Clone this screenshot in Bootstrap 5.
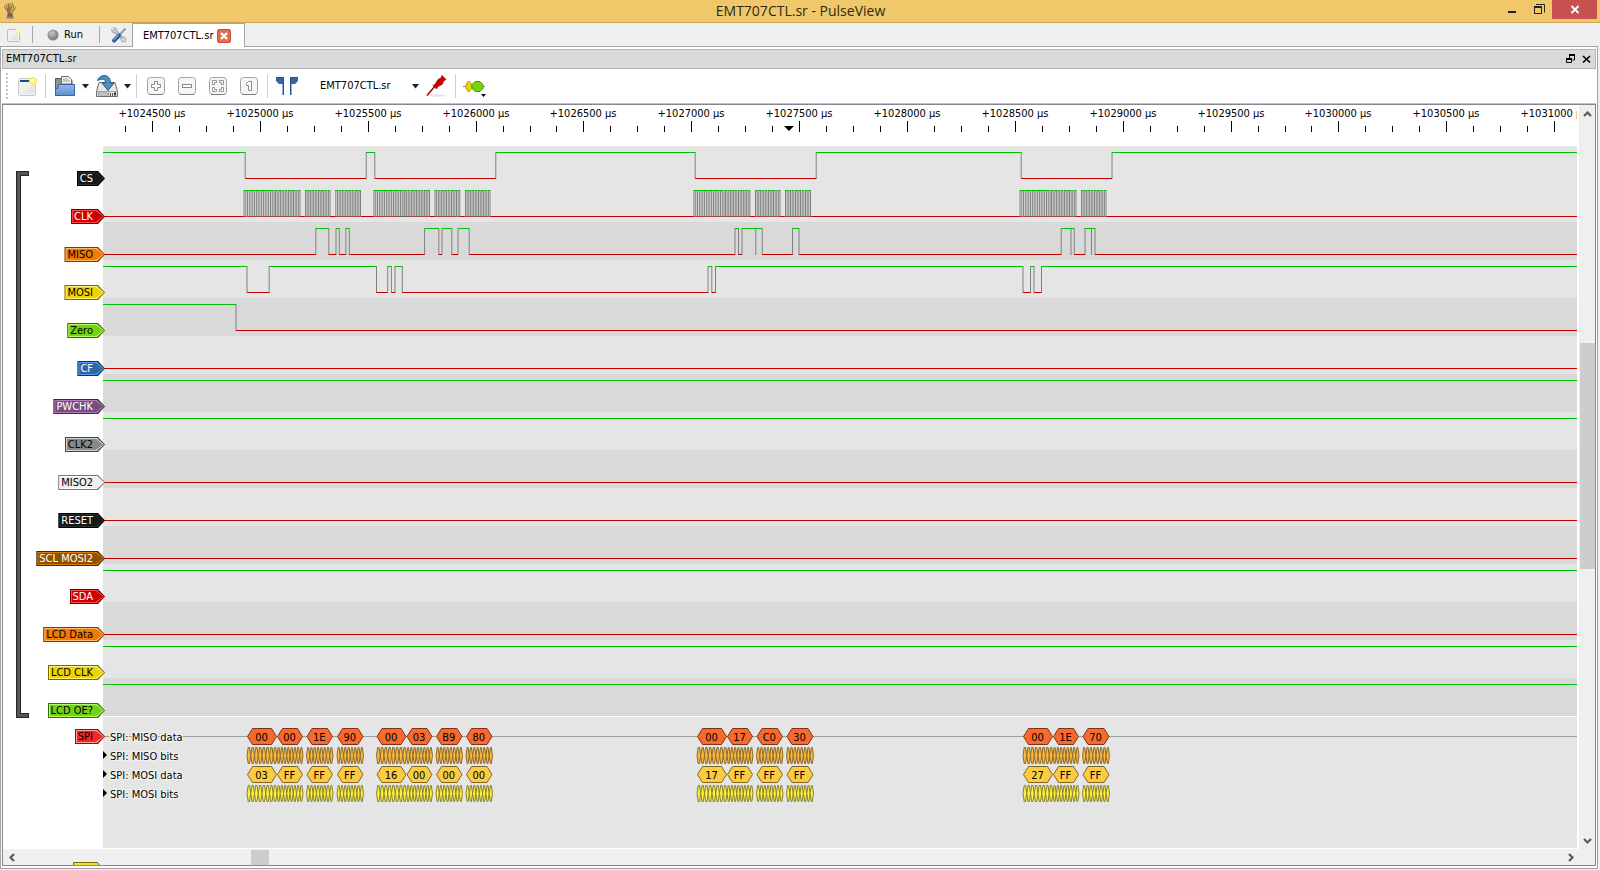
<!DOCTYPE html>
<html lang="en">
<head>
<meta charset="utf-8">
<meta name="viewport" content="width=device-width, initial-scale=1">
<title>EMT707CTL.sr - PulseView</title>
<link href="https://cdn.jsdelivr.net/npm/bootstrap@5.3.0/dist/css/bootstrap.min.css" rel="stylesheet">
<style>
  :root { --ui: "DejaVu Sans Condensed", "DejaVu Sans", sans-serif; }
  body { font: 11px/16px var(--ui); color: #000; background: #efefef; }
  button { font: inherit; color: inherit; border: 0; padding: 0; background: none; }
  svg { display: block; flex: none; }
  .titlebar { height: 23px; background: #f0c869; border-bottom: 1px solid #c9a558; }
  .titlebar h1 { font: 14px/22px "Open Sans", "Noto Sans", sans-serif; color: #2e2814; }
  .title-side { flex: 1 1 0; }
  .win-btn { width: 26px; height: 19px; }
  .win-close { width: 45px; background: #c75050; }
  .menubar { height: 23px; }
  .menu-rule { width: 1px; height: 17px; background: #a8a8a8; }
  .file-tab { height: 24px; margin-bottom: -1px; padding: 0 12px 0 10px; background: #fff; border: 1px solid #a3a3a3; border-bottom: 0; z-index: 1; }
  .tab-link { color: #000; text-decoration: none; margin-right: 2px; }
  .dock { border: 1px solid #a3a3a3; background: #fff; margin: 0 2px 1px 0; padding: 2px 1px; }
  .dock-title { height: 20px; background: #d9d9d9; border: 1px solid #b4b4b4; padding-left: 3px; }
  .dock-title h2 { font: inherit; line-height: 20px; }
  .toolbar { height: 35px; border-bottom: 1px solid #c4c4c4; padding-left: 4px; }
  .tool { width: 31px; height: 32px; display: flex; align-items: center; justify-content: center; }
  .tool-drop { width: 11px; }
  .grip { width: 5px; height: 26px; background: repeating-linear-gradient(#c4c4c4 0 2px, transparent 2px 4px) 0 0 / 2px 100% no-repeat; }
  .tool-rule { width: 1px; height: 24px; margin: 0 3px; background: #cfcfcf; }
  .device { width: 119px; }
  .device select { appearance: none; border: 0; background: none; font: inherit; color: #000; padding: 0 18px; width: 119px; height: 24px; }
  .device svg { position: absolute; right: 1px; top: 10px; pointer-events: none; }
  .view-frame { border: 1px solid #828790; display: grid; grid-template-columns: minmax(0, 1fr) 16px; grid-template-rows: minmax(0, 1fr) 16px; }
  .ruler { height: 41px; }
  .traces { grid-area: 1 / 1; padding-right: 2px; }
  .view-text { font: 11px var(--ui); }
  .bracket { width: 13px; margin: 25px 0 -2px 13px; background: #262626; position: relative;
    clip-path: polygon(0 0, 100% 0, 100% 5px, 5px 5px, 5px calc(100% - 5px), 100% calc(100% - 5px), 100% 100%, 0 100%); }
  .bracket::after { content: ""; position: absolute; inset: 1px; background: #555;
    clip-path: polygon(0 0, 100% 0, 100% 3px, 3px 3px, 3px calc(100% - 3px), 100% calc(100% - 3px), 100% 100%, 0 100%); }
  .channel { display: grid; grid-template-columns: 74px minmax(0, 1fr); height: 38px; }
  .channel-head { padding-top: 25px; margin-right: -2px; z-index: 1; display: flex; justify-content: flex-end; align-items: flex-start; }
  .lane { background: #e5e5e5; }
  .lane-dark { background: #d9d9d9; }
  .tag { position: relative; height: 15px; line-height: 16px; padding: 0 12px 0 3px; white-space: nowrap; color: #000; background: var(--edge); isolation: isolate; }
  .tag, .tag::before, .tag::after { clip-path: polygon(0 0, calc(100% - 7px) 0, 100% 50%, calc(100% - 7px) 100%, 0 100%); }
  .tag::before, .tag::after { content: ""; position: absolute; z-index: -1; }
  .tag::before { inset: 1px; background: var(--glow); }
  .tag::after { inset: 2px; background: var(--fill); }
  .tag-black { --fill: #16191a; --glow: #272c2d; --edge: #000; color: #fff; }
  .tag-red { --fill: #cc0000; --glow: #ff4848; --edge: #6a0000; color: #fff; }
  .tag-orange { --fill: #f57900; --glow: #ffb868; --edge: #7a3c00; }
  .tag-yellow { --fill: #edd400; --glow: #fff27a; --edge: #766a00; }
  .tag-green { --fill: #73d216; --glow: #adff58; --edge: #396908; }
  .tag-blue { --fill: #3465a4; --glow: #5099f8; --edge: #1a3252; color: #fff; }
  .tag-purple { --fill: #75507b; --glow: #b57abf; --edge: #3a283d; color: #fff; }
  .tag-grey { --fill: #888a85; --glow: #cfd2ca; --edge: #444542; }
  .tag-white { --fill: #eeeeec; --glow: #fff; --edge: #777776; }
  .tag-brown { --fill: #8f5202; --glow: #d87c04; --edge: #472900; color: #fff; }
  .tag-spi { --fill: #ef2929; --glow: #ff9c9c; --edge: #771414; }
  .decoder { border-top: 1px solid #fff; border-bottom: 1px solid #fff; display: grid; grid-template-columns: 100px minmax(0, 1fr); min-height: 120px; }
  .decoder .channel-head { padding-top: 12px; }
  .scroll-v, .scroll-h { background: #efefef; display: flex; align-items: center; }
  .scroll-v { grid-area: 1 / 2; flex-direction: column; }
  .scroll-h { grid-area: 2 / 1 / 3 / 3; padding-right: 16px; }
  .scroll-btn { width: 16px; height: 16px; display: flex; align-items: center; justify-content: center; }
  .thumb { background: #cdcdcd; }
  .scroll-v .thumb { width: 15px; }
  .scroll-h .thumb { height: 15px; }
  .next-tag { position: absolute; left: 70px; bottom: 0; height: 3px; overflow: hidden; }
</style>
</head>
<body>
<div class="d-flex flex-column min-vh-100">

  <header class="titlebar d-flex">
    <div class="title-side ps-1">
      <svg width="14" height="20" viewBox="0 0 14 20" style="margin-left:-1px">
        <path d="M6 14L1 6M6 14L3 4M6.500 14L5 3M7 14L7 3M7.500 14L9.500 3M8 14L11 5M8 14L13 7" stroke="#7d6c48" fill="none"/>
        <path d="M6 13L4.500 8" stroke="#b04aa0"/><path d="M6.500 13L6 7" stroke="#e0522f" stroke-width="1.500"/><path d="M7.500 13V7" stroke="#63a83c"/><path d="M8 13L9.500 8" stroke="#e8a030" stroke-width="1.500"/>
        <path d="M4.500 13h5l.500 5h-6z" fill="#70685e"/><path d="M3.500 16.500h7v2h-7z" fill="#8a8378"/>
      </svg>
    </div>
    <h1 class="m-0 text-nowrap">EMT707CTL.sr - PulseView</h1>
    <div class="title-side d-flex justify-content-end" style="padding-right:3px">
      <button class="win-btn" aria-label="Minimize"><svg width="26" height="19"><path d="M8 11h8v2h-8z" fill="#222"/></svg></button>
      <button class="win-btn" aria-label="Restore"><svg width="26" height="19"><path d="M10 4.500h8.500v8" fill="none" stroke="#222"/><path d="M8.500 6.500h7v7h-7z" fill="none" stroke="#222"/><path d="M8 6h8v2h-8z" fill="#222"/></svg></button>
      <button class="win-btn win-close" aria-label="Close"><svg width="45" height="19"><path d="M19.500 6l7 7M26.500 6l-7 7" stroke="#fff" stroke-width="1.800"/></svg></button>
    </div>
  </header>

  <nav class="menubar d-flex align-items-center" aria-label="Sessions">
    <button class="ms-1" aria-label="New session">
      <svg width="18" height="18"><rect x="3.500" y="3.500" width="12" height="12" rx="1" fill="#f0f0ee" stroke="#bcbcb8"/><path d="M5 14l9-8v8z" fill="#e6e6e4"/><circle cx="14" cy="5" r="2.500" fill="#f4efa8"/><circle cx="14" cy="5" r="1" fill="#fffce0"/></svg>
    </button>
    <span class="menu-rule" style="margin-left:10px"></span>
    <button class="d-flex align-items-center" style="margin-left:13px">
      <svg width="14" height="14"><defs><radialGradient id="led" cx=".4" cy=".35"><stop offset="0" stop-color="#c6c9c4"/><stop offset="1" stop-color="#858782"/></radialGradient></defs><circle cx="7" cy="7" r="5.500" fill="url(#led)"/></svg>
      <span style="margin-left:4px">Run</span>
    </button>
    <span class="menu-rule" style="margin-left:16px"></span>
    <button style="margin-left:10px" aria-label="Settings">
      <svg width="18" height="18" viewBox="0 0 18 18"><path d="M5 5L14 14" stroke="#8e9090" stroke-width="3"/><path d="M5 5L14 14" stroke="#dcdcda" stroke-width="1.400"/><path d="M3.500 1.500L5 4L4 5L1.500 3.500Q1.500 7 5 7.500L7.500 5Q7 1.500 3.500 1.500z" fill="#d6d6d4" stroke="#8e9090" stroke-width=".7"/><circle cx="13.500" cy="13.500" r="2.500" fill="#d6d6d4" stroke="#8e9090" stroke-width=".7"/><path d="M15.500 2.500L8.500 10" stroke="#9b9d9d" stroke-width="2"/><path d="M9 9.500L4 14.500" stroke="#2f5c9c" stroke-width="4" stroke-linecap="round"/><path d="M8 9.500L4 13.500" stroke="#7fa6da" stroke-width="1.500" stroke-linecap="round"/></svg>
    </button>
    <div class="file-tab d-flex align-items-center align-self-start" style="margin-left:4px">
      <a class="tab-link" href="#">EMT707CTL.sr</a>
      <button aria-label="Close tab"><svg width="16" height="16"><rect x="1.500" y="1.500" width="13" height="13" rx="1.500" fill="#dd6f50" stroke="#cf4a30"/><path d="M5 5l6 6M11 5l-6 6" stroke="#fff" stroke-width="2.400"/></svg></button>
    </div>
  </nav>

  <main class="dock d-flex flex-column flex-grow-1">
    <div class="dock-title d-flex align-items-center justify-content-between flex-shrink-0">
      <h2 class="m-0">EMT707CTL.sr</h2>
      <div class="d-flex">
        <button aria-label="Float"><svg width="16" height="17"><path d="M6 4h5.500v5h-2" fill="none" stroke="#000"/><path d="M6 3h6v2h-6z"/><path d="M3.500 7.500h5v4h-5z" fill="#d9d9d9" stroke="#000"/><path d="M3 7h6v2h-6zM6 5v2h1v-2z"/></svg></button>
        <button aria-label="Close"><svg width="16" height="17"><path d="M4 5l7 6.500M11 5l-7 6.500" stroke="#000" stroke-width="1.700"/></svg></button>
      </div>
    </div>

    <div class="toolbar d-flex align-items-center flex-shrink-0" role="toolbar" aria-label="Session">
      <span class="grip"></span>
      <button class="tool" aria-label="New view"><svg width="22" height="24"><rect x="2.500" y="4.500" width="17" height="17" rx="1" fill="#f0f0ee" stroke="#c8c8c4"/><path d="M4 6h12v2h-12z" fill="#204a87"/><path d="M5 20L18 10v10z" fill="#e6e6e4"/><circle cx="17" cy="7" r="4" fill="#f8ee60"/><circle cx="17" cy="7" r="2" fill="#fdfbc4"/></svg></button>
      <span class="tool-rule"></span>
      <button class="tool" aria-label="Open"><svg width="22" height="24"><path d="M1.500 21V4.500h5l1.500 2h10V21z" fill="#8f918c" stroke="#555753"/><path d="M7.500 10V2.500h7l3 3V10z" fill="#f4f4f2" stroke="#6c6e6a"/><path d="M9 5h5M9 7h7" stroke="#9a9a98"/><defs><linearGradient id="fold" x2="0" y2="1"><stop offset="0" stop-color="#96bae6"/><stop offset="1" stop-color="#5a8fd0"/></linearGradient></defs><path d="M1.500 21.500v-7h2l1.500-4h15.500v11z" fill="url(#fold)" stroke="#3465a4"/></svg></button>
      <button class="tool tool-drop" aria-label="Open menu"><svg width="8" height="5"><path d="M0 0h7l-3.500 4.500z" fill="#222"/></svg></button>
      <button class="tool" aria-label="Save"><svg width="24" height="24"><path d="M4 8.500h16l2.500 9v5h-21v-5z" fill="#e8e8e6" stroke="#6c6e6a"/><path d="M2 17.500h20" stroke="#a4a6a2"/><rect x="3.500" y="19" width="10" height="2" fill="#fff" stroke="#888"/><path d="M15.500 19v3M17.500 19v3" stroke="#555"/><rect x="19" y="18.500" width="2" height="3" fill="#333"/><path d="M2.500 6.500Q5 1 10 1.500Q15.500 2.500 15.500 9h3.500l-6 7.500L7 9h3.500Q11 5.500 8 5Q5 5 2.500 6.500z" fill="#4f8fbf" stroke="#245a86"/></svg></button>
      <button class="tool tool-drop" aria-label="Save menu"><svg width="8" height="5"><path d="M0 0h7l-3.500 4.500z" fill="#222"/></svg></button>
      <span class="tool-rule"></span>
      <button class="tool" aria-label="Zoom in"><svg width="20" height="20"><rect x="1.500" y="1.500" width="17" height="17" rx="3" fill="#f6f6f5" stroke="#a2a49f"/><path d="M3 18.500h14" stroke="#7c7e7a"/><path d="M8.500 5.500h3v3h3v3h-3v3h-3v-3h-3v-3h3z" fill="#fff" stroke="#888a85"/></svg></button>
      <button class="tool" aria-label="Zoom out"><svg width="20" height="20"><rect x="1.500" y="1.500" width="17" height="17" rx="3" fill="#f6f6f5" stroke="#a2a49f"/><path d="M3 18.500h14" stroke="#7c7e7a"/><rect x="5.500" y="8.500" width="9" height="3" fill="#fff" stroke="#888a85"/></svg></button>
      <button class="tool" aria-label="Zoom to fit"><svg width="20" height="20"><rect x="1.500" y="1.500" width="17" height="17" rx="3" fill="#f6f6f5" stroke="#a2a49f"/><path d="M3 18.500h14" stroke="#7c7e7a"/><path d="M4.500 4.500h4v2h-2v2h-2zM11.500 4.500h4v4h-2v-2h-2zM4.500 11.500h2v2h2v2h-4zM13.500 11.500h2v4h-4v-2h2z" fill="#fff" stroke="#888a85" stroke-width=".9"/></svg></button>
      <button class="tool" aria-label="Zoom one to one"><svg width="20" height="20"><rect x="1.500" y="1.500" width="17" height="17" rx="3" fill="#f6f6f5" stroke="#a2a49f"/><path d="M3 18.500h14" stroke="#7c7e7a"/><path d="M9.500 5.500h3v9h-3v-5h-2v-2z" fill="#fff" stroke="#888a85"/></svg></button>
      <span class="tool-rule"></span>
      <button class="tool" aria-label="Show cursors"><svg width="24" height="22"><path d="M1 2h8v18h-1.500v-11h-3.500l-3-3z" fill="#3465a4"/><path d="M23 2h-8v18h1.500v-11h3.500l3-3z" fill="#3465a4"/><path d="M1.500 2.500h7v17M22.500 2.500h-7v17" fill="none" stroke="#204a87" stroke-width=".8"/></svg></button>
      <div class="device position-relative">
        <select aria-label="Device"><option>EMT707CTL.sr</option></select>
        <svg width="8" height="5"><path d="M0 0h7l-3.500 4.500z" fill="#222"/></svg>
      </div>
      <button class="tool" aria-label="Configure channels"><svg width="22" height="24"><ellipse cx="12" cy="21.500" rx="8" ry="1.200" fill="#e4e4e4"/><path d="M1 21.500L9 12" stroke="#a40000" stroke-width="1.500"/><path d="M7 11.500l2-1 3-5 3-1.500 1-2.500 4 4-2.500 1.500-1 3-5 3-1 2z" fill="#cc0000" stroke="#a40000" stroke-width=".7"/></svg></button>
      <span class="tool-rule"></span>
      <button class="tool" aria-label="Add protocol decoder"><svg width="24" height="24"><path d="M0 12.500h22" stroke="#888"/><path d="M5 7.500h1.500l2 3v4l-2 3h-1.500l-2-3v-4z" fill="#edd400" stroke="#b39b00"/><path d="M12 7.500h5l3 3v4l-3 3h-5l-3-3v-4z" fill="#73d216" stroke="#4e9a06"/><path d="M18 20h5l-2.500 3z"/></svg></button>
    </div>

    <div class="view-frame flex-grow-1 position-relative">
      <div class="d-flex flex-column traces">
        <svg class="ruler view-text w-100" id="ruler"></svg>
        <div class="d-flex">
          <div class="bracket flex-shrink-0"></div>
          <div class="flex-grow-1" id="channels"></div>
        </div>
        <div class="decoder flex-grow-1">
          <div class="channel-head"><button class="tag tag-spi">SPI</button></div>
          <div class="lane"><svg class="view-text w-100" height="100" id="decoder"></svg></div>
        </div>
      </div>
      <div class="scroll-v">
        <button class="scroll-btn" aria-label="Scroll up"><svg width="9" height="7"><path d="M1 6l3.500-3.500L8 6" fill="none" stroke="#5a5a5a" stroke-width="2.200"/></svg></button>
        <div style="flex:222 0 0"></div><div class="thumb" style="flex:225 0 0"></div><div style="flex:264 0 0"></div>
        <button class="scroll-btn" aria-label="Scroll down"><svg width="9" height="7"><path d="M1 1l3.500 3.500L8 1" fill="none" stroke="#5a5a5a" stroke-width="2.200"/></svg></button>
      </div>
      <div class="scroll-h">
        <button class="scroll-btn" aria-label="Scroll left"><svg width="7" height="9"><path d="M6 1L2.500 4.500L6 8" fill="none" stroke="#5a5a5a" stroke-width="2.200"/></svg></button>
        <div style="flex:232 0 0"></div><div class="thumb" style="flex:18 0 0"></div><div style="flex:1293 0 0"></div>
        <button class="scroll-btn" aria-label="Scroll right"><svg width="7" height="9"><path d="M1 1l3.500 3.500L1 8" fill="none" stroke="#5a5a5a" stroke-width="2.200"/></svg></button>
      </div>
      <div class="next-tag"><svg width="30" height="15"><path d="M.5.500h24l5 7-5 7h-24z" fill="#f0e040" stroke="#766a00"/></svg></div>
    </div>
  </main>
</div>

<script src="https://cdn.jsdelivr.net/npm/bootstrap@5.3.0/dist/js/bootstrap.bundle.min.js"></script>
<script>
  // Sample positions are in window units; the plot begins at ORIGIN.
  const ORIGIN = 103, HIGH_Y = 6, LOW_Y = 32;
  const GREEN = '#00c000', RED = '#c00000', EDGE = '#808080';

  const bar = (x1, x2, y, color) =>
    `<line x1="${x1}" x2="${x2}" y1="${y + 0.5}" y2="${y + 0.5}" stroke="${color}"/>`;
  const edge = x => `<line x1="${x}" x2="${x}" y1="${HIGH_Y}" y2="${LOW_Y + 1}" stroke="${EDGE}"/>`;

  function wave(start, edges, glitches = []) {
    let level = start, from = 0, out = '', verticals = '';
    for (const e of edges) {
      const x = e - ORIGIN;
      out += bar(from, x, level ? HIGH_Y : LOW_Y, level ? GREEN : RED);
      verticals += edge(x);
      from = x; level = !level;
    }
    out += bar(from, '100%', level ? HIGH_Y : LOW_Y, level ? GREEN : RED);
    return verticals + glitches.map(g => edge(g - ORIGIN)).join('') + out;
  }

  // Eight clock pulses per transferred byte; the first byte of each group is slower.
  const bursts = [[243.5, 273.5, 1], [275, 300.5], [305, 330.5], [335.3, 361],
    [373.5, 403.5, 1], [404.5, 430], [434.5, 460.3], [465, 490.5],
    [693.5, 723.5, 1], [725, 750.3], [755, 780.5], [785, 811],
    [1019.5, 1049.5, 1], [1051, 1076.5], [1081, 1106.5]];
  function clock() {
    let out = bar(0, '100%', LOW_Y, RED);
    for (const [a, b, slow] of bursts) {
      const step = (b - a) / (slow ? 17 : 15.6);
      for (let i = 0; i < (slow ? 18 : 16); i++) out += edge(a + 0.5 + i * step - ORIGIN);
      if (slow) out += bar(a - ORIGIN, b - ORIGIN, HIGH_Y, GREEN);
      else for (let i = 0; i < 8; i++) {
        const x = a + i * step * 2 - ORIGIN;
        out += bar(x, x + 2, HIGH_Y, GREEN);
      }
    }
    return out;
  }

  const channels = [
    ['CS', 'black', 0, wave(true, [245.2, 366.2, 374.8, 495.8, 695.2, 816.2, 1021.2, 1112])],
    ['CLK', 'red', 0, clock()],
    ['MISO', 'orange', 1, wave(false, [315.8, 328.8, 336, 339.3, 345.9, 349.3, 424.6, 438.8, 442, 451.8, 458, 469.2, 735, 738.5, 742, 762.2, 792.5, 799, 1061.2, 1074.2, 1085, 1095], [755.8, 1071, 1091.5])],
    ['MOSI', 'yellow', 0, wave(true, [247, 269.2, 376.5, 387.7, 391.4, 395, 402.3, 708, 711.8, 715.5, 1023, 1030.5, 1034, 1041.5])],
    ['Zero', 'green', 1, wave(true, [236])],
    ['CF', 'blue', 0, wave(false, [])],
    ['PWCHK', 'purple', 1, wave(true, [])],
    ['CLK2', 'grey', 0, wave(true, [])],
    ['MISO2', 'white', 1, wave(false, [])],
    ['RESET', 'black', 0, wave(false, [])],
    ['SCL MOSI2', 'brown', 1, wave(false, [])],
    ['SDA', 'red', 0, wave(true, [])],
    ['LCD Data', 'orange', 1, wave(false, [])],
    ['LCD CLK', 'yellow', 0, wave(true, [])],
    ['LCD OE?', 'green', 1, wave(true, [])]
  ];
  document.getElementById('channels').innerHTML = channels.map(([name, tone, dark, trace]) => `
    <div class="channel">
      <div class="channel-head"><button class="tag tag-${tone}">${name}</button></div>
      <div class="lane ${dark ? 'lane-dark' : ''}"><svg class="w-100" height="38">${trace}</svg></div>
    </div>`).join('');

  // Time scale: a labelled tick each 500 µs with three minor ticks between.
  let scale = '';
  for (let i = -1; i <= 52; i++) {
    const x = Math.round(149 + i * 26.965), major = i % 4 === 0;
    scale += `<rect x="${x}" y="${major ? 16 : 21}" width="1" height="${major ? 11 : 6}"/>`;
    if (major) scale += `<text x="${x}" y="12" text-anchor="middle">+${1024500 + i / 4 * 500} µs</text>`;
  }
  document.getElementById('ruler').innerHTML = scale + '<path d="M781 21h10l-5 5z"/>';

  const bytes = [[247, 277, '00', '03'], [277, 303, '00', 'FF'], [306.5, 333, '1E', 'FF'], [337, 363.5, '90', 'FF'],
    [376.5, 406.5, '00', '16'], [406.5, 432.5, '03', '00'], [436, 462.5, 'B9', '00'], [466, 492.5, '80', '00'],
    [697, 727, '00', '17'], [727, 753, '17', 'FF'], [756.5, 783, 'C0', 'FF'], [786.5, 813.5, '30', 'FF'],
    [1023, 1053, '00', '27'], [1053, 1079, '1E', 'FF'], [1082.5, 1109.5, '70', 'FF']];
  const hex = (a, b, y, cut, fill, stroke) =>
    `<path d="M${a} ${y + 8}L${a + cut} ${y}H${b - cut}L${b} ${y + 8}L${b - cut} ${y + 16}H${a + cut}z" fill="${fill}" stroke="${stroke}"/>`;
  let rows = bar(0, '100%', 19, '#a0a0a0');
  for (const [a0, b0, miso, mosi] of bytes) {
    const a = a0 - ORIGIN, b = b0 - ORIGIN, mid = (a + b) / 2 - 0.5, bit = (b - a) / 8;
    rows += hex(a + 0.5, b - 0.5, 11.5, 5, '#f8692e', '#7c3417') + hex(a + 0.5, b - 0.5, 49.5, 5, '#fccb42', '#7e6521');
    for (let i = 0; i < 8; i++) {
      const l = a + i * bit, r = l + bit;
      rows += hex(l, r, 30.5, 1.2, '#fcb83c', '#8a6a28') + hex(l, r, 68.5, 1.2, '#fcf040', '#8a8228');
    }
    rows += `<text x="${mid}" y="24" text-anchor="middle">${miso}</text><text x="${mid}" y="62" text-anchor="middle">${mosi}</text>`;
  }
  ['MISO data', 'MISO bits', 'MOSI data', 'MOSI bits'].forEach((label, i) => {
    if (i) rows += `<path d="M0 ${15 + i * 19}l4 4-4 4z"/>`;
    rows += `<text x="7" y="${24 + i * 19}" stroke="#f4f4f4" stroke-width="2" paint-order="stroke">SPI: ${label}</text>`;
  });
  document.getElementById('decoder').innerHTML = rows;
</script>
</body>
</html>
